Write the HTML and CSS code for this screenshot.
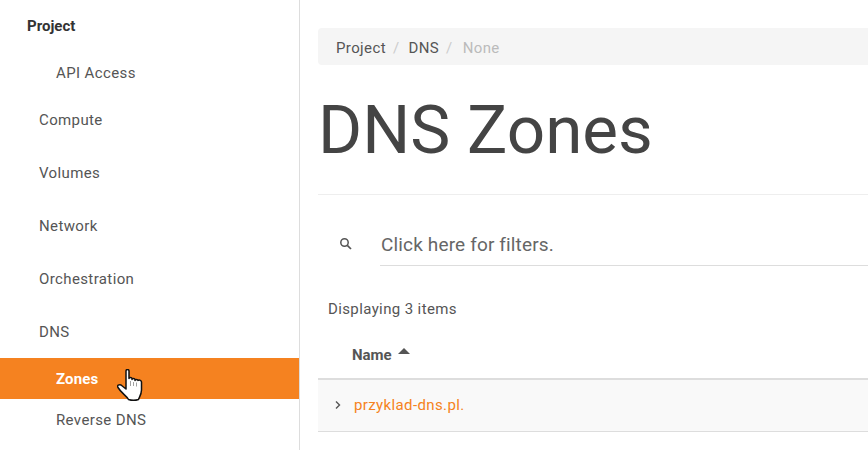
FILE: index.html
```html
<!DOCTYPE html>
<html lang="en">
<head>
  <meta charset="UTF-8">
  <title>DNS Zones</title>
  <link rel="stylesheet" href="styles.css">
</head>
<body>
  <div class="layout">
    <nav class="sidebar">
      <div class="nav-group">Project</div>
      <a class="nav-sub nav-api">API Access</a>
      <a class="nav-item">Compute</a>
      <a class="nav-item">Volumes</a>
      <a class="nav-item">Network</a>
      <a class="nav-item">Orchestration</a>
      <a class="nav-item nav-dns">DNS</a>
      <a class="nav-sub active">Zones
        <svg class="cursor" width="27" height="33" viewBox="0 0 27 33">
          <path d="M9 2c0-2 3-2 3 0v7.500c0-1.500 3-1.500 3 0v1c0-1.500 3-1.500 3 0v1c0-1.500 3-1.500 3 0 1.500-1 3.500 0 3.500 1.500V21c0 4-2 7-3 9.500-3 1-7 1-10 0-2-4-7-6-10.500-12-1.500-2 1-3.500 3-2.500L9 20Z" fill="#fff" stroke="#111" stroke-width="1.500" stroke-linejoin="round"/>
          <path d="M13.500 12v5M16.500 13v4M19.500 13.500v4" stroke="#888" stroke-width="0.800" fill="none"/>
        </svg>
      </a>
      <a class="nav-sub nav-reverse">Reverse DNS</a>
    </nav>

    <main class="content">
      <ol class="breadcrumb">
        <li>Project</li>
        <li class="sep">/</li>
        <li>DNS</li>
        <li class="sep">/</li>
        <li class="current">None</li>
      </ol>

      <h1 class="page-title">DNS Zones</h1>

      <div class="filter-row">
        <svg class="search-icon" width="14" height="14" viewBox="0 0 14 14">
          <circle cx="5.5" cy="5.5" r="3.7" fill="none" stroke="#555" stroke-width="1.5"/>
          <path d="M8.3 8.3 12 12" stroke="#555" stroke-width="1.7"/>
        </svg>
        <div class="filter-input">Click here for filters.</div>
      </div>

      <div class="count">Displaying 3 items</div>

      <div class="table-head">
        <span class="col-name">Name</span>
        <span class="sort-arrow"></span>
      </div>

      <div class="table-row">
        <svg class="chevron" width="8" height="10" viewBox="0 0 8 10">
          <path d="M2 1.5 5.5 5 2 8.5" fill="none" stroke="#555" stroke-width="1.4"/>
        </svg>
        <a class="zone-link">przyklad-dns.pl.</a>
      </div>
    </main>
  </div>
</body>
</html>
```

FILE: styles.css
```css
* {
  box-sizing: border-box;
}

html, body {
  height: 100%;
}

body {
  margin: 0;
  overflow: hidden;
  font-family: Roboto, sans-serif;
  font-size: 15px;
  letter-spacing: 0.38px;
  color: #555;
  background: #fff;
}

.layout {
  display: flex;
  height: 450px;
}

.sidebar {
  flex: 0 0 300px;
  display: flex;
  flex-direction: column;
  border-right: 1px solid #ddd;
}

.nav-group {
  height: 53px;
  padding-left: 27px;
  line-height: 52px;
  font-weight: 700;
  letter-spacing: 0;
  color: #333;
}

.nav-item {
  height: 53px;
  padding-left: 39px;
  line-height: 53px;
}

.nav-dns {
  height: 52px;
}

.nav-sub {
  position: relative;
  height: 41px;
  padding-left: 56px;
  line-height: 43px;
}

.nav-api {
  line-height: 40px;
}

.nav-sub.active {
  font-weight: 700;
  letter-spacing: 0.15px;
  color: #fff;
  background: #f58220;
}

.cursor {
  position: absolute;
  left: 117px;
  top: 11px;
}

.content {
  flex: 1;
  min-width: 0;
  padding: 28px 0 0 18px;
}

.breadcrumb {
  display: flex;
  height: 37px;
  margin: 0;
  padding: 2px 0 0 18px;
  align-items: center;
  list-style: none;
  background: #f5f5f5;
  border-radius: 4px 0 0 4px;
}

.sep {
  margin: 0 9px 0 7px;
  color: #ccc;
}

.sep + li + .sep {
  margin-right: 10px;
}

.current {
  color: #bbb;
}

.page-title {
  height: 130px;
  margin: 0;
  border-bottom: 1px solid #eee;
  font-size: 67.4px;
  font-weight: 400;
  letter-spacing: 0;
  line-height: 130px;
  color: #444;
}

.filter-row {
  display: flex;
  height: 71px;
  padding-left: 21px;
}

.search-icon {
  flex: none;
  align-self: flex-end;
  margin: 0 27px 15px 0;
}

.filter-input {
  flex: 1;
  align-self: flex-end;
  height: 43px;
  padding: 1px 0 0 1px;
  border-bottom: 1px solid #ddd;
  font-size: 19px;
  letter-spacing: 0.15px;
  line-height: 42px;
  color: #666;
}

.count {
  height: 53px;
  padding: 33px 0 0 10px;
  line-height: 20px;
}

.table-head {
  display: flex;
  align-items: flex-start;
  height: 61px;
  padding: 26px 0 0 34px;
  border-bottom: 2px solid #ddd;
}

.col-name {
  font-weight: 700;
  letter-spacing: 0;
  line-height: 20px;
}

.sort-arrow {
  width: 0;
  height: 0;
  margin: 3px 0 0 6px;
  border-left: 6px solid transparent;
  border-right: 6px solid transparent;
  border-bottom: 6px solid #555;
}

.table-row {
  display: flex;
  align-items: center;
  height: 52px;
  padding: 0 0 2px 16px;
  background: #f9f9f9;
  border-bottom: 1px solid #ddd;
}

.chevron {
  margin-right: 12px;
}

.zone-link {
  color: #f58220;
}
```
